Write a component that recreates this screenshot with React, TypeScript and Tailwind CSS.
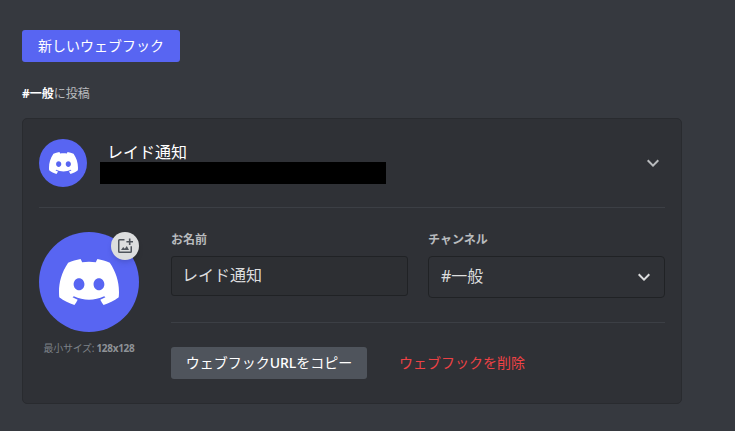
import React from "react";

function DiscordMark({ className }: { className?: string }) {
  return (
    <svg viewBox="1 0 26 20" preserveAspectRatio="none" className={className} fill="#fff">
      <path d="M23.0212 1.67671C21.3107 0.879656 19.5079 0.318797 17.6584 0C17.4062 0.461742 17.1749 0.934541 16.9708 1.4184C15.003 1.12145 12.9974 1.12145 11.0283 1.4184C10.819 0.934541 10.589 0.461744 10.3368 0.00546311C8.48074 0.324393 6.67795 0.885118 4.96746 1.68231C1.56727 6.77853 0.649666 11.7538 1.11108 16.652C3.10102 18.1418 5.3262 19.2743 7.69177 20C8.22338 19.2743 8.69519 18.4993 9.09812 17.691C8.32996 17.3997 7.58522 17.0424 6.87684 16.6135C7.06531 16.4762 7.24726 16.3387 7.42403 16.1847C11.5911 18.1749 16.408 18.1749 20.5763 16.1847C20.7531 16.3332 20.9351 16.4762 21.1171 16.6135C20.41 17.0369 19.6639 17.3997 18.897 17.691C19.3052 18.4993 19.7718 19.2689 20.3021 19.9945C22.6677 19.2689 24.8929 18.1364 26.8828 16.6466H26.8893C27.43 10.9731 25.9665 6.04728 23.0212 1.67671ZM9.68041 13.6383C8.39754 13.6383 7.34085 12.4453 7.34085 10.994C7.34085 9.54272 8.37155 8.34973 9.68041 8.34973C10.9893 8.34973 12.0395 9.54272 12.0187 10.994C12.0187 12.4453 10.9828 13.6383 9.68041 13.6383ZM18.3161 13.6383C17.0332 13.6383 15.9765 12.4453 15.9765 10.994C15.9765 9.54272 17.0124 8.34973 18.3161 8.34973C19.6184 8.34973 20.6751 9.54272 20.6543 10.994C20.6543 12.4453 19.6184 13.6383 18.3161 13.6383Z" />
    </svg>
  );
}

function Chevron({ className }: { className?: string }) {
  return (
    <svg viewBox="0 0 24 24" className={className} fill="currentColor">
      <path d="M16.59 8.59 12 13.17 7.41 8.59 6 10l6 6 6-6z" />
    </svg>
  );
}

function UploadIcon() {
  return (
    <svg viewBox="0 0 16 16" className="size-4" fill="#4f545c">
      <path d="M7.500 1H2.500A1.500 1.500 0 0 0 1 2.500v11A1.500 1.500 0 0 0 2.500 15h11a1.500 1.500 0 0 0 1.500-1.500V8.300h-1.500v5.200h-11v-11h5z" />
      <path d="M11.900 .5h1.600v2.400H16v1.600h-2.500V7h-1.600V4.500H9.400V2.900h2.500z" />
      <path d="M4 12l2.200-3 1.600 1.700L9.800 8 12 12z" />
    </svg>
  );
}

export default function App() {
  return (
    <main className="h-[431px] w-[735px] overflow-hidden bg-[#36393f] pl-[22px] pt-[30px] font-['Noto_Sans','Noto_Sans_CJK_JP',sans-serif]">
      <button className="flex h-8 w-[158px] items-center justify-center whitespace-nowrap rounded-[3px] bg-[#5865f2] text-sm leading-4 text-white">
        新しいウェブフック
      </button>
      <p className="mt-6 h-4 text-xs leading-4 text-[#b9bbbe]">
        <strong className="font-bold text-white">#一般</strong>に投稿
      </p>
      <section className="mt-4 h-[286px] w-[660px] rounded-[5px] border border-[#292b2f] bg-[#2f3136] px-4 pt-5">
        <header className="flex h-12">
          <div className="flex size-12 shrink-0 items-center justify-center rounded-full bg-[#5865f2]">
            <DiscordMark className="h-[22px] w-[29px]" />
          </div>
          <div className="ml-[13px] pt-[3px]">
            <h2 className="h-5 pl-[7px] text-base leading-5 text-white">レイド通知</h2>
            <div className="h-[22px] w-[286px] bg-black" />
          </div>
          <Chevron className="ml-auto mt-3 size-6 text-[#b9bbbe]" />
        </header>
        <div className="mt-5 h-px bg-[#3c3f45]" />
        <div className="mt-6 flex">
          <div className="w-[100px] shrink-0">
            <div className="relative flex size-[100px] items-center justify-center rounded-full bg-[#5865f2]">
              <DiscordMark className="h-[46px] w-[60px]" />
              <span className="absolute right-0 top-0 flex size-7 items-center justify-center rounded-full bg-[#dcddde] shadow-md">
                <UploadIcon />
              </span>
            </div>
            <p className="mt-2 whitespace-nowrap text-center text-[10px] leading-4 tracking-[-0.3px] text-[#8e9297]">
              <span className="text-[#7d8188]">最小サイズ: </span>
              <strong>128x128</strong>
            </p>
          </div>
          <div className="ml-8 w-[494px]">
            <div className="flex gap-5">
              <div className="w-[237px]">
                <h3 className="mb-2 text-xs font-bold leading-4 text-[#b9bbbe]">お名前</h3>
                <div className="flex h-10 items-center rounded-[3px] border border-[#202225] bg-[#2d2f33] px-2.5 pb-0.5 text-base leading-5 text-[#dcddde]">
                  レイド通知
                </div>
              </div>
              <div className="w-[237px]">
                <h3 className="mb-2 text-xs font-bold leading-4 text-[#b9bbbe]">チャンネル</h3>
                <div className="flex h-[42px] items-center justify-between rounded border border-[#202225] px-3 text-base leading-5 text-[#dcddde]">
                  <span className="pb-0.5">#一般</span>
                  <Chevron className="-mr-1 size-6" />
                </div>
              </div>
            </div>
            <div className="mt-6 h-px bg-[#3c3f45]" />
            <div className="mt-6 flex">
              <button className="flex h-8 w-[196px] items-center justify-center whitespace-nowrap rounded-[3px] bg-[#4f545c] text-sm leading-4 text-white">
                <span>
                  ウェブフック<span className="font-medium">URL</span>をコピー
                </span>
              </button>
              <button className="ml-8 h-8 whitespace-nowrap text-sm leading-4 text-[#ed4245]">
                ウェブフックを削除
              </button>
            </div>
          </div>
        </div>
      </section>
    </main>
  );
}
